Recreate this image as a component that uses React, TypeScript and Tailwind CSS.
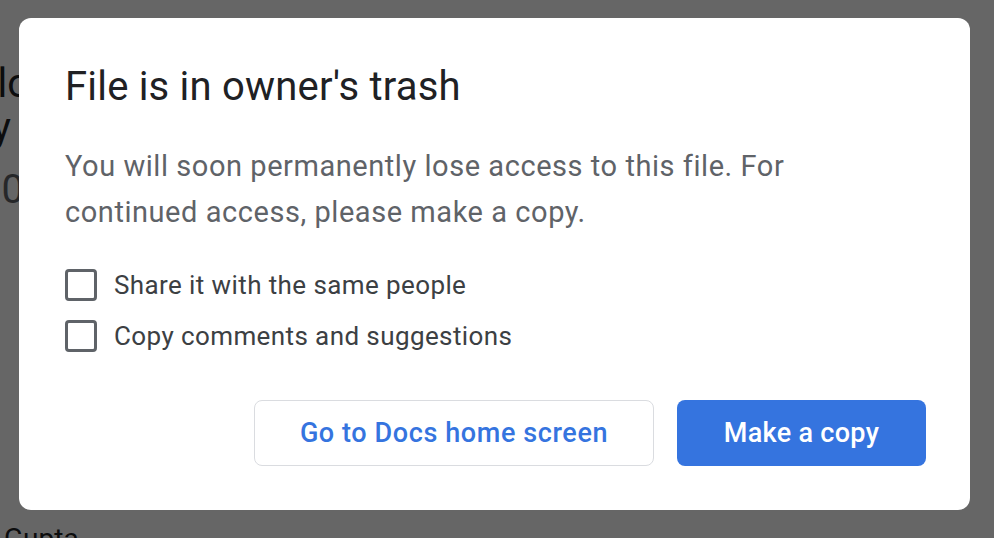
export default function App() {
  return (
    <div className="relative w-[994px] h-[538px] overflow-hidden bg-white font-['Roboto',sans-serif]">
      {/* page behind the dialog */}
      <div className="flex flex-col pt-[60px] text-[#202124]">
        <div className="w-[30px] flex justify-end text-[40px] leading-[48px] whitespace-nowrap">Hello</div>
        <div className="w-[11px] flex justify-end text-[40px] leading-[40px] whitespace-nowrap">Any</div>
        <div className="mt-[20px] w-[24px] flex justify-end text-[40px] leading-[44px] text-[#5f6368] whitespace-nowrap">10</div>
      </div>
      <div className="mt-[311px] ml-[4px] text-[28px] leading-[32px] text-[#202124] whitespace-nowrap">Gupta</div>

      {/* overlay */}
      <div className="absolute inset-0 bg-black/60 pt-[18px] pl-[19px]">
        <div className="w-[951px] h-[492px] rounded-xl bg-white pt-[45px] pl-[46px] pr-[44px] flex flex-col">
          <h1 className="text-[40px] leading-[48px] text-[#202124] tracking-[0.2px]">File is in owner's trash</h1>
          <p className="mt-[32px] text-[29px] leading-[46px] text-[#5f6368] tracking-[0.55px] w-[780px]">
            You will soon permanently lose access to this file. For continued access, please make a copy.
          </p>
          <div className="mt-[34px] flex flex-col gap-[19px]">
            <label className="flex items-center gap-[17px]">
              <span className="w-[32px] h-[32px] rounded-[4px] border-[3px] border-[#5f6368]" />
              <span className="text-[26px] leading-[32px] text-[#3c4043] tracking-[0.4px]">Share it with the same people</span>
            </label>
            <label className="flex items-center gap-[17px]">
              <span className="w-[32px] h-[32px] rounded-[4px] border-[3px] border-[#5f6368]" />
              <span className="text-[26px] leading-[32px] text-[#3c4043] tracking-[0.4px]">Copy comments and suggestions</span>
            </label>
          </div>
          <div className="mt-[48px] flex justify-end gap-[23px]">
            <button className="w-[400px] h-[66px] rounded-[8px] border border-[#dadce0] bg-white text-[27px] font-medium text-[#3574df] tracking-[0.6px]">
              Go to Docs home screen
            </button>
            <button className="w-[249px] h-[66px] rounded-[8px] bg-[#3574df] text-[27px] font-medium text-white tracking-[0.3px]">
              Make a copy
            </button>
          </div>
        </div>
      </div>
    </div>
  )
}
